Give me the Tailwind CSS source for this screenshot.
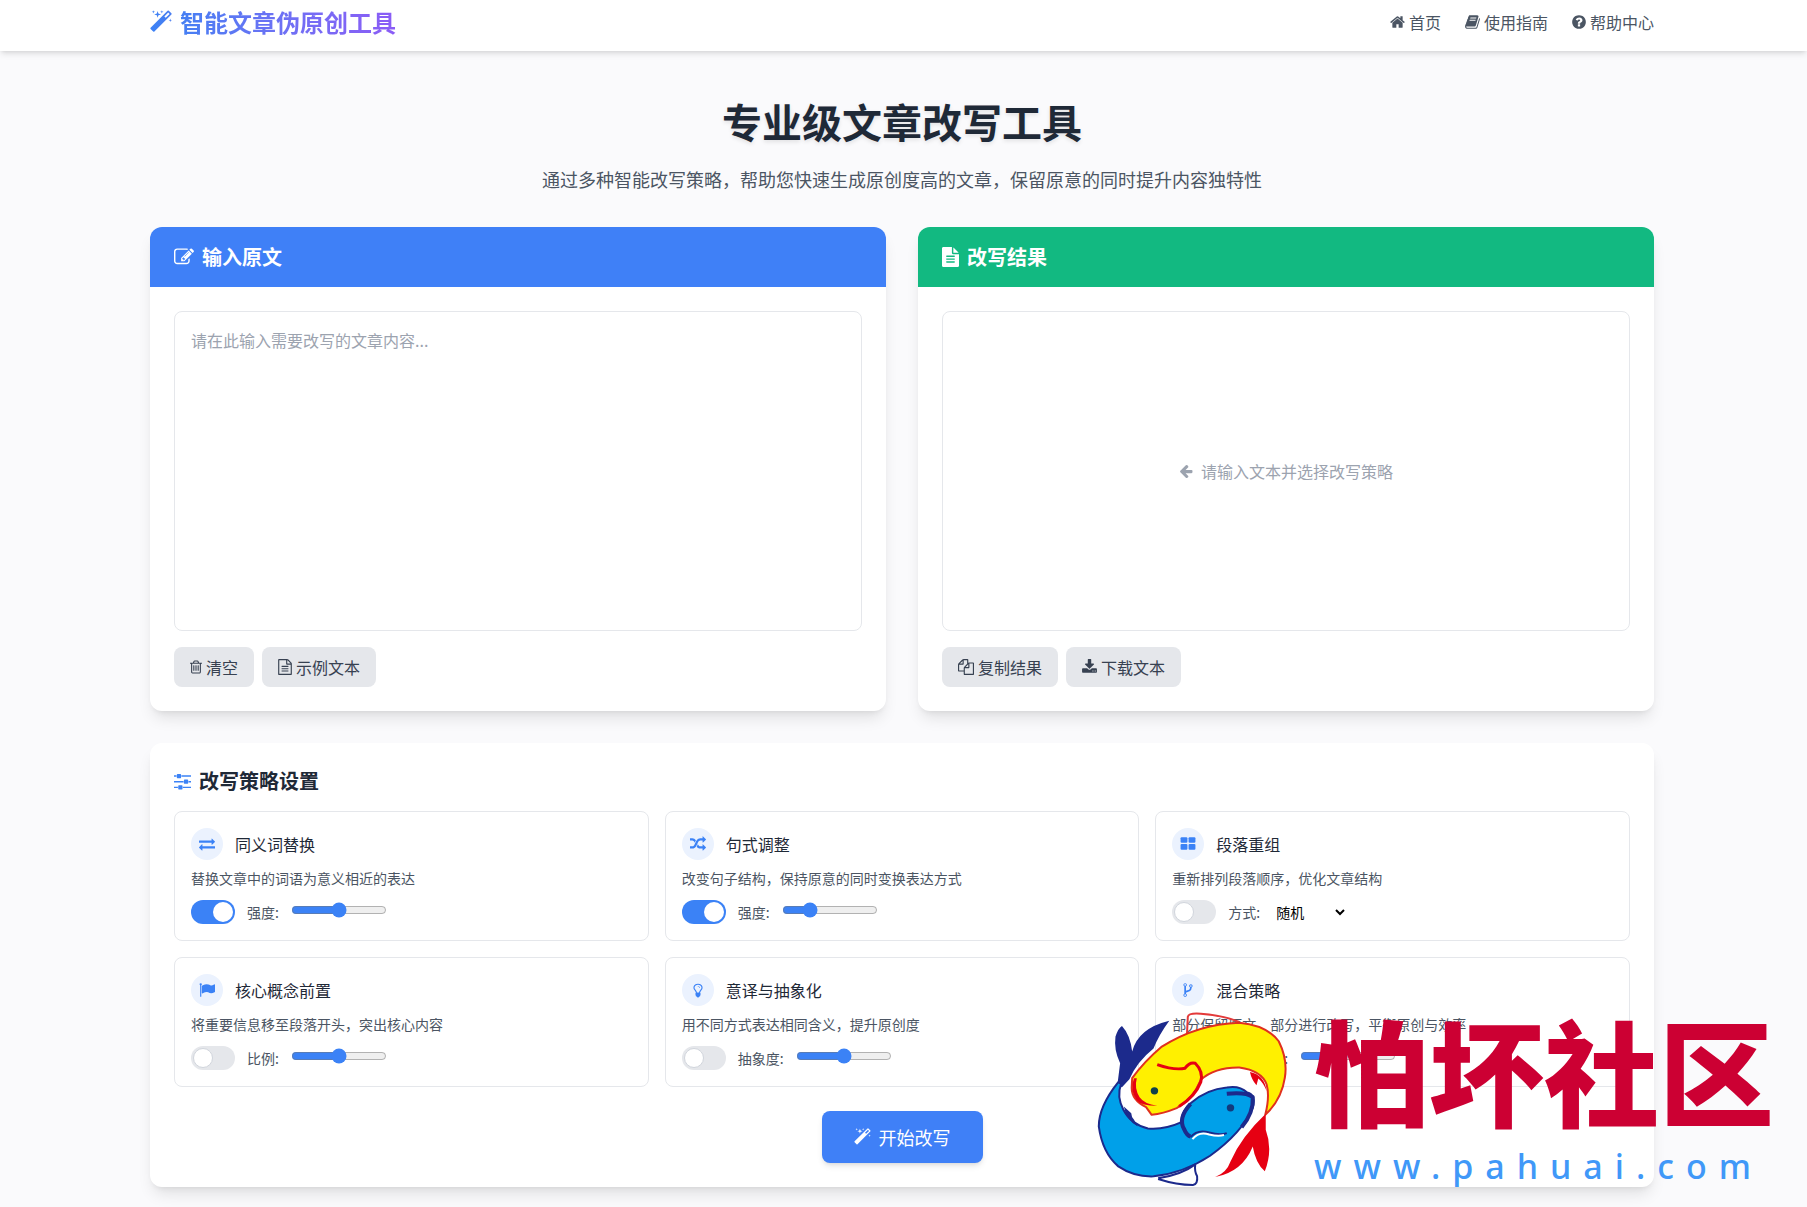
<!DOCTYPE html>
<html lang="zh-CN">
<head>
<meta charset="utf-8">
<meta name="viewport" content="width=device-width, initial-scale=1">
<title>智能文章伪原创工具</title>
<script src="https://cdn.jsdelivr.net/npm/@tailwindcss/browser@4"></script>
</head>
<body class="relative min-h-screen overflow-x-hidden bg-[#fafafc] font-['Noto_Sans_CJK_SC',sans-serif] text-base text-[#1f2937]">

<header class="bg-white pr-[3px] shadow-md">
  <div class="mx-auto flex max-w-[1504px] items-center justify-between pt-[6px] pb-[13px]">
    <a href="#" class="flex items-center gap-2">
      <svg class="h-6 w-[22px]" viewBox="64 0 1664 1792" aria-hidden="true"><defs><linearGradient id="wand" x1="0" x2="1"><stop offset="0" stop-color="#3b82f6"/><stop offset="1" stop-color="#4a7df0"/></linearGradient></defs><path fill="url(#wand)" d="M1254 581l293-293-107-107-293 293zm447-293q0 27-18 45l-1286 1286q-18 18-45 18t-45-18l-198-198q-18-18-18-45t18-45l1286-1286q18-18 45-18t45 18l198 198q18 18 18 45zm-1351-190l98 30-98 30-30 98-30-98-98-30 98-30 30-98zm350 162l196 60-196 60-60 196-60-196-196-60 196-60 60-196zm930 478l98 30-98 30-30 98-30-98-98-30 98-30 30-98zm-640-640l98 30-98 30-30 98-30-98-98-30 98-30 30-98z"/></svg>
      <span class="bg-gradient-to-r from-[#447ff3] to-[#8b5cf6] bg-clip-text text-2xl font-bold text-transparent">智能文章伪原创工具</span>
    </a>
    <nav class="flex items-center gap-6 text-[#4b5563]">
      <a href="#" class="flex items-center gap-1">
        <svg class="h-4 w-[15px]" viewBox="64 0 1664 1792" fill="currentColor" aria-hidden="true"><path d="M1472 992v480q0 26-19 45t-45 19h-384v-384h-256v384h-384q-26 0-45-19t-19-45v-480q0-1 .5-3t.5-3l575-474 575 474q1 2 1 6zm223-69l-62 74q-8 9-21 11h-3q-13 0-21-7l-692-577-692 577q-12 8-24 7-13-2-21-11l-62-74q-8-10-7-23.5t11-21.5l719-599q32-26 76-26t76 26l244 204v-195q0-14 9-23t23-9h192q14 0 23 9t9 23v408l219 182q10 8 11 21.5t-7 23.5z"/></svg>首页</a>
      <a href="#" class="flex items-center gap-1">
        <svg class="h-4 w-[15px]" viewBox="64 0 1664 1792" fill="currentColor" aria-hidden="true"><path d="M1703 478q40 57 18 129l-275 906q-19 64-76.5 107.5t-122.5 43.5h-923q-77 0-148.5-53.5t-99.5-131.5q-24-67-2-127 0-4 3-27t4-37q1-8-3-21.5t-3-19.5q2-11 8-21t16.5-23.5 16.5-23.5q23-38 45-91.5t30-91.5q3-10 .5-30t-.5-28q3-11 17-28t17-23q21-36 42-92t25-90q1-9-2.5-32t.5-28q4-13 22-30.5t22-22.5q19-26 42.5-84.5t27.5-96.5q1-8-3-25.5t-2-26.5q2-8 9-18t18-23 17-21q8-12 16.5-30.5t15-35 16-36 19.5-32 26.5-23.5 36-11.5 47.5 5.5l-1 3q38-9 51-9h761q74 0 114 56t18 130l-274 906q-36 119-71.5 153.5t-128.5 34.5h-869q-27 0-38 15-11 16-1 43 24 70 144 70h923q29 0 56-15.5t35-41.5l300-987q7-22 5-57 38 15 59 43zm-1064 2q-4 13 2 22.5t20 9.5h608q13 0 25.5-9.5t16.5-22.5l21-64q4-13-2-22.5t-20-9.5h-608q-13 0-25.5 9.5t-16.5 22.5zm-83 256q-4 13 2 22.5t20 9.5h608q13 0 25.5-9.5t16.5-22.5l21-64q4-13-2-22.5t-20-9.5h-608q-13 0-25.5 9.5t-16.5 22.5z"/></svg>使用指南</a>
      <a href="#" class="flex items-center gap-1">
        <svg class="h-4 w-[14px]" viewBox="128 0 1536 1792" fill="currentColor" aria-hidden="true"><path d="M1024 1376v-192q0-14-9-23t-23-9h-192q-14 0-23 9t-9 23v192q0 14 9 23t23 9h192q14 0 23-9t9-23zm256-672q0-88-55.5-163t-138.5-116-170-41q-243 0-371 213-15 24 8 42l132 100q7 6 19 6 16 0 25-12 53-68 86-92 34-24 86-24 48 0 85.5 26t37.5 59q0 38-20 61t-68 45q-63 28-115.5 86.5t-52.5 125.5v36q0 14 9 23t23 9h192q14 0 23-9t9-23q0-19 21.5-49.5t54.5-49.5q32-18 49-28.5t46-35 44.5-48 28-60.5 12.5-81zm384 192q0 209-103 385.5t-279.5 279.5-385.5 103-385.5-103-279.5-279.5-103-385.5 103-385.5 279.5-279.5 385.5-103 385.5 103 279.5 279.5 103 385.5z"/></svg>帮助中心</a>
    </nav>
  </div>
</header>

<main class="pr-[3px] pt-[46px] pb-5">
  <div class="mx-auto max-w-[1504px]">
    <section class="mb-[34px] text-center">
      <h1 class="mb-5 text-[40px] leading-[48px] font-bold [text-shadow:0_2px_4px_rgba(0,0,0,0.1)]">专业级文章改写工具</h1>
      <p class="text-lg text-[#4b5563]">通过多种智能改写策略，帮助您快速生成原创度高的文章，保留原意的同时提升内容独特性</p>
    </section>

    <div class="mb-8 grid grid-cols-2 gap-8">
      <section class="overflow-hidden rounded-xl bg-white shadow-lg">
        <h2 class="flex items-center gap-2 bg-[#3f80f7] px-6 py-4 text-xl font-bold text-white">
          <svg class="size-5" viewBox="0 0 1792 1792" fill="currentColor" aria-hidden="true"><path d="M888 1184l116-116-152-152-116 116v56h96v96h56zm440-720q-16-16-33 1l-350 350q-17 17-1 33t33-1l350-350q17-17 1-33zm80 594v190q0 119-84.5 203.5t-203.5 84.5h-832q-119 0-203.5-84.5t-84.5-203.5v-832q0-119 84.5-203.5t203.5-84.5h832q63 0 117 25 15 7 18 23 3 17-9 29l-49 49q-14 14-32 8-23-6-45-6h-832q-66 0-113 47t-47 113v832q0 66 47 113t113 47h832q66 0 113-47t47-113v-126q0-13 9-22l64-64q15-15 35-7t20 29zm-96-738l288 288-672 672h-288v-288zm444 132l-92 92-288-288 92-92q28-28 68-28t68 28l152 152q28 28 28 68t-28 68z"/></svg>
          <label for="source">输入原文</label>
        </h2>
        <div class="p-6">
          <textarea id="source" class="mb-4 block h-80 w-full resize-none rounded-lg border border-gray-200 p-4 placeholder:text-[#9ca3af]" placeholder="请在此输入需要改写的文章内容..."></textarea>
          <div class="flex gap-2">
            <button type="button" class="flex h-10 items-center gap-1 rounded-lg bg-[#e5e7eb] px-4 text-[#374151]">
              <svg class="h-4 w-3" viewBox="192 0 1408 1792" fill="currentColor" aria-hidden="true"><path d="M704 736v576q0 14-9 23t-23 9h-64q-14 0-23-9t-9-23v-576q0-14 9-23t23-9h64q14 0 23 9t9 23zm256 0v576q0 14-9 23t-23 9h-64q-14 0-23-9t-9-23v-576q0-14 9-23t23-9h64q14 0 23 9t9 23zm256 0v576q0 14-9 23t-23 9h-64q-14 0-23-9t-9-23v-576q0-14 9-23t23-9h64q14 0 23 9t9 23zm128 724v-948h-896v948q0 22 7 40.5t14.5 27 10.5 8.5h832q3 0 10.5-8.5t14.5-27 7-40.5zm-672-1076h448l-48-117q-7-9-17-11h-317q-10 2-17 11zm928 32v64q0 14-9 23t-23 9h-96v948q0 83-47 143.5t-113 60.5h-832q-66 0-113-58.5t-47-141.5v-952h-96q-14 0-23-9t-9-23v-64q0-14 9-23t23-9h309l70-167q15-37 54-63t79-26h320q40 0 79 26t54 63l70 167h309q14 0 23 9t9 23z"/></svg>清空</button>
            <button type="button" class="flex h-10 items-center gap-1 rounded-lg bg-[#e5e7eb] px-4 text-[#374151]">
              <svg class="h-4 w-[14px]" viewBox="128 0 1536 1792" fill="currentColor" aria-hidden="true"><path d="M1596 380q28 28 48 76t20 88v1152q0 40-28 68t-68 28h-1344q-40 0-68-28t-28-68v-1600q0-40 28-68t68-28h896q40 0 88 20t76 48zm-444-244v376h376q-10-29-22-41l-313-313q-12-12-41-22zm384 1528v-1024h-416q-40 0-68-28t-28-68v-416h-768v1536h1280zm-1024-864q0-14 9-23t23-9h704q14 0 23 9t9 23v64q0 14-9 23t-23 9h-704q-14 0-23-9t-9-23v-64zm736 224q14 0 23 9t9 23v64q0 14-9 23t-23 9h-704q-14 0-23-9t-9-23v-64q0-14 9-23t23-9h704zm0 256q14 0 23 9t9 23v64q0 14-9 23t-23 9h-704q-14 0-23-9t-9-23v-64q0-14 9-23t23-9h704z"/></svg>示例文本</button>
          </div>
        </div>
      </section>

      <section class="overflow-hidden rounded-xl bg-white shadow-lg">
        <h2 class="flex items-center gap-2 bg-[#12b981] px-6 py-4 text-xl font-bold text-white">
          <svg class="h-5 w-[17px]" viewBox="128 0 1536 1792" fill="currentColor" aria-hidden="true"><path d="M1596 476q14 14 28 36h-472v-472q22 14 36 28zm-476 164h544v1056q0 40-28 68t-68 28h-1344q-40 0-68-28t-28-68v-1600q0-40 28-68t68-28h800v544q0 40 28 68t68 28zm160 736v-64q0-14-9-23t-23-9h-704q-14 0-23 9t-9 23v64q0 14 9 23t23 9h704q14 0 23-9t9-23zm0-256v-64q0-14-9-23t-23-9h-704q-14 0-23 9t-9 23v64q0 14 9 23t23 9h704q14 0 23-9t9-23zm0-256v-64q0-14-9-23t-23-9h-704q-14 0-23 9t-9 23v64q0 14 9 23t23 9h704q14 0 23-9t9-23z"/></svg>
          改写结果
        </h2>
        <div class="p-6">
          <div class="mb-4 flex h-80 items-center justify-center gap-2 rounded-lg border border-gray-200 text-[#9ca3af]">
            <svg class="h-4 w-[14px]" viewBox="64 0 1664 1792" fill="currentColor" aria-hidden="true"><path d="M1664 896v128q0 53-32.5 90.5t-84.5 37.5h-704l293 294q38 36 38 90t-38 90l-75 76q-37 37-90 37-52 0-91-37l-651-652q-37-37-37-90 0-52 37-91l651-650q38-38 91-38 52 0 90 38l75 74q38 38 38 91t-38 91l-293 293h704q52 0 84.5 37.5t32.5 90.5z"/></svg>
            <p>请输入文本并选择改写策略</p>
          </div>
          <div class="flex gap-2">
            <button type="button" class="flex h-10 items-center gap-1 rounded-lg bg-[#e5e7eb] px-4 text-[#374151]">
              <svg class="size-4" viewBox="0 0 1792 1792" fill="currentColor" aria-hidden="true"><path d="M1696 384q40 0 68 28t28 68v1216q0 40-28 68t-68 28h-960q-40 0-68-28t-28-68v-288h-544q-40 0-68-28t-28-68v-672q0-40 20-88t48-76l408-408q28-28 76-48t88-20h416q40 0 68 28t28 68v328q68-40 128-40h416zm-544 213l-299 299h299v-299zm-640-384l-299 299h299v-299zm196 647l316-316v-416h-384v416q0 40-28 68t-68 28h-416v640h512v-256q0-40 20-88t48-76zm956 804v-1152h-384v416q0 40-28 68t-68 28h-416v640h896z"/></svg>复制结果</button>
            <button type="button" class="flex h-10 items-center gap-1 rounded-lg bg-[#e5e7eb] px-4 text-[#374151]">
              <svg class="h-4 w-[15px]" viewBox="64 0 1664 1792" fill="currentColor" aria-hidden="true"><path d="M1344 1344q0-26-19-45t-45-19-45 19-19 45 19 45 45 19 45-19 19-45zm256 0q0-26-19-45t-45-19-45 19-19 45 19 45 45 19 45-19 19-45zm128-224v320q0 40-28 68t-68 28h-1472q-40 0-68-28t-28-68v-320q0-40 28-68t68-28h465l135 136q58 56 136 56t136-56l136-136h464q40 0 68 28t28 68zm-325-569q17 41-14 70l-448 448q-18 19-45 19t-45-19l-448-448q-31-29-14-70 17-39 59-39h256v-448q0-26 19-45t45-19h256q26 0 45 19t19 45v448h256q42 0 59 39z"/></svg>下载文本</button>
          </div>
        </div>
      </section>
    </div>

    <section class="rounded-xl bg-white p-6 shadow-lg">
      <h2 class="mb-4 flex items-center gap-2 text-xl font-bold">
        <svg class="h-5 w-[17px] text-[#3b82f6]" viewBox="128 0 1536 1792" fill="currentColor" aria-hidden="true"><path d="M480 1408v128h-352v-128h352zm352-128q26 0 45 19t19 45v256q0 26-19 45t-45 19h-256q-26 0-45-19t-19-45v-256q0-26 19-45t45-19h256zm160-384v128h-864v-128h864zm-640-512v128h-224v-128h224zm1312 1024v128h-736v-128h736zm-960-1152q26 0 45 19t19 45v256q0 26-19 45t-45 19h-256q-26 0-45-19t-19-45v-256q0-26 19-45t45-19h256zm640 512q26 0 45 19t19 45v256q0 26-19 45t-45 19h-256q-26 0-45-19t-19-45v-256q0-26 19-45t45-19h256zm320 128v128h-224v-128h224zm0-512v128h-864v-128h864z"/></svg>
        改写策略设置
      </h2>

      <div class="mb-6 grid grid-cols-3 gap-4">
        <article class="rounded-lg border border-gray-200 p-4">
          <div class="mb-2 flex items-center gap-3">
            <span class="flex size-8 items-center justify-center rounded-full bg-[#ebf2fe] text-[#3b82f6]"><svg class="size-4" viewBox="0 0 1792 1792" fill="currentColor" aria-hidden="true"><path d="M1792 1184v192q0 13-9.5 22.5t-22.5 9.5h-1376v192q0 13-9.5 22.5t-22.5 9.5q-12 0-24-10l-319-320q-9-9-9-22 0-14 9-23l320-320q9-9 23-9 13 0 22.5 9.5t9.5 22.5v192h1376q13 0 22.5 9.5t9.5 22.5zm0-544q0 14-9 23l-320 320q-9 9-23 9-13 0-22.5-9.5t-9.5-22.5v-192h-1376q-13 0-22.5-9.5t-9.5-22.5v-192q0-13 9.5-22.5t22.5-9.5h1376v-192q0-14 9-23t23-9q12 0 24 10l319 319q9 9 9 23z"/></svg></span>
            <h3>同义词替换</h3>
          </div>
          <p class="mb-3 text-sm text-[#4b5563]">替换文章中的词语为意义相近的表达</p>
          <div class="flex h-6 items-center gap-3 text-sm text-[#4b5563]">
            <input type="checkbox" checked aria-label="同义词替换" class="h-6 w-11 appearance-none rounded-full bg-gray-200 p-[2px] before:block before:size-5 before:rounded-full before:bg-white checked:bg-[#3b82f6] checked:before:translate-x-5">
            <label for="r1">强度:</label>
            <input id="r1" type="range" value="50" class="h-5 w-24 self-start accent-[#3b82f6]">
          </div>
        </article>

        <article class="rounded-lg border border-gray-200 p-4">
          <div class="mb-2 flex items-center gap-3">
            <span class="flex size-8 items-center justify-center rounded-full bg-[#ebf2fe] text-[#3b82f6]"><svg class="size-4" viewBox="0 0 1792 1792" fill="currentColor" aria-hidden="true"><path d="M666 481q-60 92-137 273-22-45-37-72.5t-40.5-63.5-51-56.5-63-35-81.5-14.5h-224q-14 0-23-9t-9-23v-192q0-14 9-23t23-9h224q250 0 410 225zm1126 799q0 14-9 23l-320 320q-9 9-23 9-13 0-22.5-9.5t-9.5-22.5v-192q-32 0-85 .5t-81 1-73-1-71-5-64-10.5-63-18.5-58-28.5-59-40-55-53.5-56-69.5q59-93 136-273 22 45 37 72.5t40.5 63.5 51 56.5 63 35 81.5 14.5h256v-192q0-14 9-23t23-9q12 0 24 10l319 319q9 9 9 23zm0-896q0 14-9 23l-320 320q-9 9-23 9-13 0-22.5-9.5t-9.5-22.5v-192h-256q-48 0-87 15t-69 45-51 61.5-45 77.5q-32 62-78 171-29 66-49.5 111t-54 105-64 100-74 83-90 68.5-106.5 42-128 16.5h-224q-14 0-23-9t-9-23v-192q0-14 9-23t23-9h224q48 0 87-15t69-45 51-61.5 45-77.5q32-62 78-171 29-66 49.5-111t54-105 64-100 74-83 90-68.5 106.5-42 128-16.5h256v-192q0-14 9-23t23-9q12 0 24 10l319 319q9 9 9 23z"/></svg></span>
            <h3>句式调整</h3>
          </div>
          <p class="mb-3 text-sm text-[#4b5563]">改变句子结构，保持原意的同时变换表达方式</p>
          <div class="flex h-6 items-center gap-3 text-sm text-[#4b5563]">
            <input type="checkbox" checked aria-label="句式调整" class="h-6 w-11 appearance-none rounded-full bg-gray-200 p-[2px] before:block before:size-5 before:rounded-full before:bg-white checked:bg-[#3b82f6] checked:before:translate-x-5">
            <label for="r2">强度:</label>
            <input id="r2" type="range" value="25" class="h-5 w-24 self-start accent-[#3b82f6]">
          </div>
        </article>

        <article class="rounded-lg border border-gray-200 p-4">
          <div class="mb-2 flex items-center gap-3">
            <span class="flex size-8 items-center justify-center rounded-full bg-[#ebf2fe] text-[#3b82f6]"><svg class="size-4" viewBox="0 0 1792 1792" fill="currentColor" aria-hidden="true"><rect x="64" y="128" width="768" height="640" rx="120"/><rect x="960" y="128" width="768" height="640" rx="120"/><rect x="64" y="896" width="768" height="640" rx="120"/><rect x="960" y="896" width="768" height="640" rx="120"/></svg></span>
            <h3>段落重组</h3>
          </div>
          <p class="mb-3 text-sm text-[#4b5563]">重新排列段落顺序，优化文章结构</p>
          <div class="flex h-6 items-center gap-3 text-sm text-[#4b5563]">
            <input type="checkbox" aria-label="段落重组" class="h-6 w-11 appearance-none rounded-full bg-gray-200 p-[2px] before:block before:size-5 before:rounded-full before:border before:border-gray-300 before:bg-white checked:bg-[#3b82f6] checked:before:translate-x-5">
            <label for="mode">方式:</label>
            <select id="mode" class="w-[76px] text-black"><option>随机</option><option>倒序</option></select>
          </div>
        </article>

        <article class="rounded-lg border border-gray-200 p-4">
          <div class="mb-2 flex items-center gap-3">
            <span class="flex size-8 items-center justify-center rounded-full bg-[#ebf2fe] text-[#3b82f6]"><svg class="size-4" viewBox="0 0 1792 1792" fill="currentColor" aria-hidden="true"><path d="M320 256q0 72-64 110v1266q0 13-9.5 22.5t-22.5 9.5h-64q-13 0-22.5-9.5t-9.5-22.5v-1266q-64-38-64-110 0-53 37.5-90.5t90.5-37.5 90.5 37.5 37.5 90.5zm1472 64v763q0 25-12.5 38.5t-39.5 27.5q-215 116-369 116-61 0-123.5-22t-108.5-48-115.5-48-142.5-22q-192 0-464 146-17 9-33 9-26 0-45-19t-19-45v-742q0-32 31-55 21-14 79-43 236-120 421-120 107 0 200 29t219 88q38 19 88 19 54 0 117.5-21t110-47 88-47 54.5-21q26 0 45 19t19 45z"/></svg></span>
            <h3>核心概念前置</h3>
          </div>
          <p class="mb-3 text-sm text-[#4b5563]">将重要信息移至段落开头，突出核心内容</p>
          <div class="flex h-6 items-center gap-3 text-sm text-[#4b5563]">
            <input type="checkbox" aria-label="核心概念前置" class="h-6 w-11 appearance-none rounded-full bg-gray-200 p-[2px] before:block before:size-5 before:rounded-full before:border before:border-gray-300 before:bg-white checked:bg-[#3b82f6] checked:before:translate-x-5">
            <label for="r4">比例:</label>
            <input id="r4" type="range" value="50" class="h-5 w-24 self-start accent-[#3b82f6]">
          </div>
        </article>

        <article class="rounded-lg border border-gray-200 p-4">
          <div class="mb-2 flex items-center gap-3">
            <span class="flex size-8 items-center justify-center rounded-full bg-[#ebf2fe] text-[#3b82f6]"><svg class="size-4" viewBox="0 0 1792 1792" fill="currentColor" aria-hidden="true"><path d="M1120 640q0 13-9.5 22.5t-22.5 9.5-22.5-9.5-9.5-22.5q0-46-54-71t-106-25q-13 0-22.5-9.5t-9.5-22.5 9.5-22.5 22.5-9.5q50 0 99.5 16t87 54 37.5 90zm160 0q0-72-34.5-134t-90-101.5-123-62-136.5-22.5-136.5 22.5-123 62-90 101.5-34.5 134q0 101 68 180 10 11 30.5 33t30.5 33q128 153 141 298h228q13-145 141-298 10-11 30.5-33t30.5-33q68-79 68-180zm128 0q0 155-103 268-45 49-74.5 87t-59.5 95.5-34 107.5q47 28 47 82 0 37-25 64 25 27 25 64 0 52-45 81 13 23 13 47 0 46-31.5 71t-77.5 25q-20 44-60 70t-87 26-87-26-60-70q-46 0-77.5-25t-31.5-71q0-24 13-47-45-29-45-81 0-37 25-64-25-27-25-64 0-54 47-82-4-50-34-107.5t-59.5-95.5-74.5-87q-103-113-103-268 0-99 44.5-184.5t117-142 164-89 186.5-32.5 186.5 32.5 164 89 117 142 44.5 184.5z"/></svg></span>
            <h3>意译与抽象化</h3>
          </div>
          <p class="mb-3 text-sm text-[#4b5563]">用不同方式表达相同含义，提升原创度</p>
          <div class="flex h-6 items-center gap-3 text-sm text-[#4b5563]">
            <input type="checkbox" aria-label="意译与抽象化" class="h-6 w-11 appearance-none rounded-full bg-gray-200 p-[2px] before:block before:size-5 before:rounded-full before:border before:border-gray-300 before:bg-white checked:bg-[#3b82f6] checked:before:translate-x-5">
            <label for="r5">抽象度:</label>
            <input id="r5" type="range" value="50" class="h-5 w-24 self-start accent-[#3b82f6]">
          </div>
        </article>

        <article class="rounded-lg border border-gray-200 p-4">
          <div class="mb-2 flex items-center gap-3">
            <span class="flex size-8 items-center justify-center rounded-full bg-[#ebf2fe] text-[#3b82f6]"><svg class="size-4" viewBox="0 0 1792 1792" fill="currentColor" aria-hidden="true"><path d="M672 1472q0-40-28-68t-68-28-68 28-28 68 28 68 68 28 68-28 28-68zm0-1152q0-40-28-68t-68-28-68 28-28 68 28 68 68 28 68-28 28-68zm640 128q0-40-28-68t-68-28-68 28-28 68 28 68 68 28 68-28 28-68zm96 0q0 52-26 96.5t-70 69.5q-2 287-226 414-67 38-203 81-128 40-169.5 71t-41.5 100v26q44 25 70 69.5t26 96.5q0 80-56 136t-136 56-136-56-56-136q0-52 26-96.5t70-69.5v-820q-44-25-70-69.5t-26-96.5q0-80 56-136t136-56 136 56 56 136q0 52-26 96.5t-70 69.5v497q54-26 154-57 55-17 87.5-29.5t70.5-31 59-39.5 40.5-51 28-69.5 8.5-91.5q-44-25-70-69.5t-26-96.5q0-80 56-136t136-56 136 56 56 136z"/></svg></span>
            <h3>混合策略</h3>
          </div>
          <p class="mb-3 text-sm text-[#4b5563]">部分保留原文，部分进行改写，平衡原创与效率</p>
          <div class="flex h-6 items-center gap-3 text-sm text-[#4b5563]">
            <input type="checkbox" aria-label="混合策略" class="h-6 w-11 appearance-none rounded-full bg-gray-200 p-[2px] before:block before:size-5 before:rounded-full before:border before:border-gray-300 before:bg-white checked:bg-[#3b82f6] checked:before:translate-x-5">
            <label for="r6">保留比例:</label>
            <input id="r6" type="range" value="40" class="h-5 w-24 self-start accent-[#3b82f6]">
          </div>
        </article>
      </div>

      <button type="button" class="mx-auto flex items-center gap-2 rounded-lg bg-[#3f80f7] px-8 py-3 text-lg text-white shadow-md">
        <svg class="h-[18px] w-[17px]" viewBox="64 0 1664 1792" fill="currentColor" aria-hidden="true"><path d="M1254 581l293-293-107-107-293 293zm447-293q0 27-18 45l-1286 1286q-18 18-45 18t-45-18l-198-198q-18-18-18-45t18-45l1286-1286q18-18 45-18t45 18l198 198q18 18 18 45zm-1351-190l98 30-98 30-30 98-30-98-98-30 98-30 30-98zm350 162l196 60-196 60-60 196-60-196-196-60 196-60 60-196zm930 478l98 30-98 30-30 98-30-98-98-30 98-30 30-98zm-640-640l98 30-98 30-30 98-30-98-98-30 98-30 30-98z"/></svg>
        开始改写
      </button>
    </section>
  </div>
</main>

<!-- site badge floating over the lower right corner -->
<aside class="pointer-events-none absolute right-8 bottom-[19px] flex items-end gap-[26px]">
  <svg class="h-[178px] w-[192px]" viewBox="36 30 414 535" preserveAspectRatio="none" fill="none" stroke-width="2" stroke-linejoin="round" aria-hidden="true">
    <path fill="#fff" d="M112 235L190 155Q260 75 345 68Q430 80 442 200Q440 280 400 345L330 430Q240 530 150 530Q50 500 42 400Q45 300 85 245Z"/>
    <path vector-effect="non-scaling-stroke" stroke="#e33a3a" d="M232 108L234 50Q236 38 262 41Q310 46 345 66"/>
    <path fill="#1c2a8c" d="M82 256L88 190Q74 150 78 110Q84 84 92 78Q110 105 114 155Q126 85 194 62Q170 108 160 146Q125 185 108 238L92 262Z"/>
    <path vector-effect="non-scaling-stroke" fill="#fff000" stroke="#e0301e" d="M114 235Q140 185 178 140Q255 72 345 68Q405 76 430 124Q450 180 443 235Q436 300 401 345Q411 290 404 254Q393 212 345 203Q292 202 262 240Q244 300 210 325Q180 342 156 345L144 322Q112 300 113 262Z"/>
    <path fill="#e60012" d="M118 235Q108 270 124 302Q134 318 168 318Q140 312 130 292Q118 265 124 235Z"/>
    <path vector-effect="non-scaling-stroke" stroke="#e60012" stroke-width="3" d="M168 194Q205 212 228 205Q238 185 250 190Q268 215 262 246Q250 290 215 320"/>
    <path fill="#e60012" d="M368 216Q371 238 382 256L386 236Q398 250 404 275Q400 225 368 216Z"/>
    <path vector-effect="non-scaling-stroke" fill="#00a0e9" stroke="#1c2a8c" d="M84 247Q42 320 42 380Q50 460 84 500Q118 532 160 530Q225 520 282 468Q350 400 374 325Q382 285 362 278Q345 256 318 263Q275 268 240 310Q222 330 219 368Q185 390 148 386Q112 375 95 330Q80 290 90 252Z"/>
    <path fill="#1c2a8c" d="M96 320Q101 360 126 380L118 360Q112 350 112 340Z"/>
    <path vector-effect="non-scaling-stroke" stroke="#1c2a8c" stroke-width="4" d="M318 282Q360 276 374 292Q376 340 350 382M240 312Q212 355 226 388Q232 408 240 410"/>
    <path vector-effect="non-scaling-stroke" stroke="#1c2a8c" d="M240 412Q254 388 280 398Q304 408 318 400"/>
    <path vector-effect="non-scaling-stroke" stroke="#fff" d="M244 418Q258 394 280 404Q298 410 312 406"/>
    <path vector-effect="non-scaling-stroke" fill="#fff" stroke="#1c2a8c" d="M170 538Q210 556 245 556Q256 553 254 530Q248 515 250 494Q222 524 170 536"/>
    <path fill="#e60012" d="M402 342Q350 410 326 485Q318 518 293 532Q352 516 374 440Q380 490 400 515Q418 450 402 390Z"/>
    <ellipse cx="162" cy="273" rx="8" ry="11" fill="#10404a"/>
    <ellipse cx="326" cy="324" rx="8" ry="11" fill="#123a7c"/>
  </svg>
  <div class="w-[461px]">
    <p class="mb-[18px] text-[115px] leading-[115px] font-black whitespace-nowrap text-[#cc0033]">怕坏社区</p>
    <p class="font-['Noto_Sans',sans-serif] text-[34px] leading-[44px] font-medium tracking-[12px] whitespace-nowrap text-[#4098f8]">www.pahuai.com</p>
  </div>
</aside>
</body>
</html>
